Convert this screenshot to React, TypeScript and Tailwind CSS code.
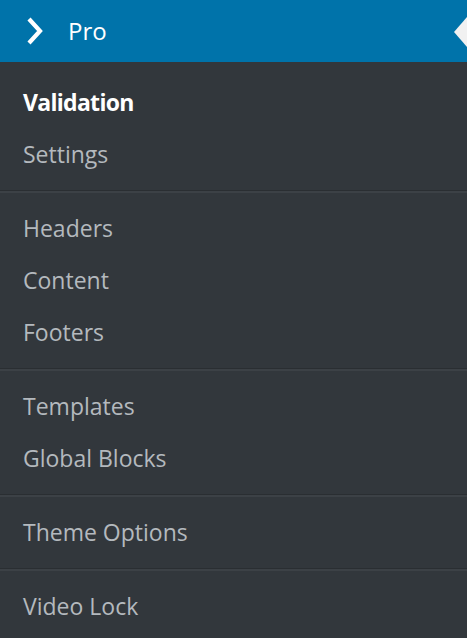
import React from "react";

const groups: { label: string; current?: boolean }[][] = [
  [{ label: "Validation", current: true }, { label: "Settings" }],
  [{ label: "Headers" }, { label: "Content" }, { label: "Footers" }],
  [{ label: "Templates" }, { label: "Global Blocks" }],
  [{ label: "Theme Options" }],
  [{ label: "Video Lock" }],
];

export default function App() {
  return (
    <div
      className="w-[467px] h-[638px] bg-[#32373c] overflow-hidden"
      style={{ fontFamily: '"Open Sans", "Noto Sans", sans-serif' }}
    >
      <div className="relative h-[62px] bg-[#0073aa] flex items-center pl-[26px]">
        <svg width="18" height="30" viewBox="0 0 18 30" className="shrink-0">
          <path d="M3 3 L14 15 L3 27" fill="none" stroke="#ffffff" strokeWidth="4.2" strokeLinecap="butt" strokeLinejoin="miter" />
        </svg>
        <span className="ml-[24px] text-white text-[24px] leading-none">Pro</span>
        <div className="absolute right-0 top-[17px] w-0 h-0 border-y-[15px] border-y-transparent border-r-[13px] border-r-[#f1f1f1]" />
      </div>
      <div className="flex flex-col">
        {groups.map((g, gi) => (
          <div key={gi} className="flex flex-col">
            {gi > 0 && (
              <div className="border-t border-[#2a2e32] h-[3px] bg-[#3c4146]" />
            )}
            <div className={gi === 0 ? "pt-[14px] pb-[10px]" : "pt-[9px] pb-[10px]"}>
              {g.map((it) => (
                <div
                  key={it.label}
                  className={
                    "h-[52px] flex items-center pl-[23px] text-[23px] " +
                    (it.current ? "text-white font-bold tracking-[-0.7px]" : "text-[#b4b9be]")
                  }
                >
                  {it.label}
                </div>
              ))}
            </div>
          </div>
        ))}
      </div>
    </div>
  );
}
